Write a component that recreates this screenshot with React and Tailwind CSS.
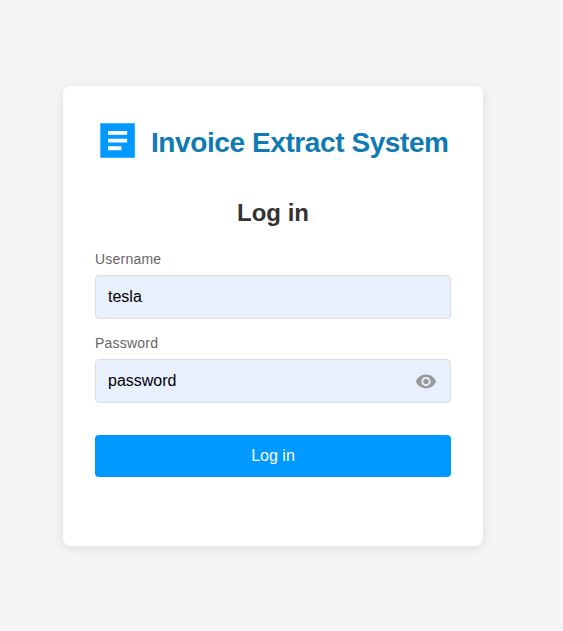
export default function App() {
  return (
    <div className="flex h-[631px] w-[563px] items-center bg-[#f5f5f5] pl-[63px] font-['Liberation_Sans',Arial,sans-serif]">
      <main className="flex h-[460px] w-[420px] flex-col rounded-lg bg-white px-8 pt-8 shadow-[0_2px_12px_rgba(0,0,0,0.1)]">
        <div className="flex h-12 items-start">
          <svg className="size-[46px] shrink-0" viewBox="0.22 0.22 24 24" fill="#0099ff">
            <path d="M3 3h18v18H3z" />
            <path d="M7 7h10v2H7zM7 11h10v2H7zM7 15h7v2H7z" fill="white" />
          </svg>
          <h1 className="mt-[9px] ml-[10px] text-[28px] leading-8 font-bold tracking-[-0.41px] whitespace-nowrap text-[#0f7ab3]">Invoice Extract System</h1>
        </div>
        <h2 className="mt-[33px] text-center text-2xl leading-7 font-bold text-[#333]">Log in</h2>
        <form className="mt-6 flex flex-col">
          <label className="text-sm leading-4 tracking-[0.22px] text-[#666]" htmlFor="username">Username</label>
          <input id="username" defaultValue="tesla" className="mt-2 h-11 rounded border border-[#ddd] bg-[#e8f0fe] px-3 text-base text-black" />
          <label className="mt-4 text-sm leading-4 tracking-[0.22px] text-[#666]" htmlFor="password">Password</label>
          <div className="mt-2 flex h-11 items-center rounded border border-[#ddd] bg-[#e8f0fe] pr-[13px] pl-3">
            <input id="password" defaultValue="password" className="min-w-0 flex-1 bg-transparent text-base text-black" />
            <svg className="size-[22px]" viewBox="0 -0.5 24 24" fill="#999">
              <path d="M12 4.5C7 4.5 2.73 7.61 1 12c1.73 4.39 6 7.5 11 7.5s9.27-3.11 11-7.5c-1.73-4.39-6-7.5-11-7.5zM12 17c-2.76 0-5-2.24-5-5s2.24-5 5-5 5 2.24 5 5-2.24 5-5 5zm0-8c-1.66 0-3 1.34-3 3s1.34 3 3 3 3-1.34 3-3-1.34-3-3-3z" />
            </svg>
          </div>
          <button type="button" className="mt-8 h-[42px] rounded bg-[#0099ff] text-base text-white">Log in</button>
        </form>
      </main>
    </div>
  );
}
